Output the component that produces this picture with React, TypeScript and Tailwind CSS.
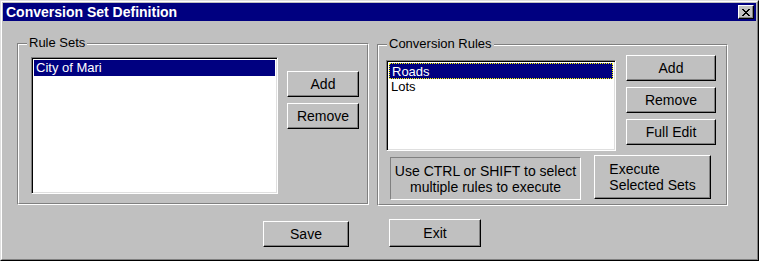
import React from 'react';

const font = "font-['Liberation_Sans',Arial,sans-serif]";

const Btn = ({ label, className }: { label: React.ReactNode; className: string }) => (
    <div
        className={`flex items-center justify-center bg-[#c0c0c0] border border-t-white border-l-white border-r-black border-b-black shadow-[inset_-1px_-1px_0_#808080] text-[14px] text-black ${className}`}
    >
        {label}
    </div>
);

const Group = ({ title, className, children }: { title: string; className: string; children: React.ReactNode }) => (
    <div className={`relative border border-t-[#808080] border-l-[#808080] border-r-white border-b-white ${className}`}>
        <div className="h-full border border-t-white border-l-white border-r-[#808080] border-b-[#808080]">
            {children}
        </div>
        <span className="absolute -top-[9px] left-[9px] px-[2px] bg-[#c0c0c0] text-[13px] leading-[15px] text-black">
            {title}
        </span>
    </div>
);

const ListBox = ({ items, focus, className }: { items: string[]; focus?: boolean; className: string }) => (
    <div
        className={`bg-white border border-t-[#808080] border-l-[#808080] border-r-white border-b-white shadow-[inset_1px_1px_0_#000,inset_-1px_-1px_0_#dfdfdf] p-[2px] ${className}`}
    >
        {items.map((item, i) => (
            <div
                key={item}
                className={`h-[16px] leading-[15px] text-[13px] pl-[2px] ${
                    i === 0 ? 'bg-[#000080] text-white' : 'text-black'
                } ${i === 0 && focus ? 'border border-dotted border-[#ffff00] pl-[1px] leading-[13px]' : ''}`}
            >
                {item}
            </div>
        ))}
    </div>
);

export default function App() {
    return (
        <div className={`w-[759px] h-[261px] bg-[#c0c0c0] ${font} border border-t-[#dfdfdf] border-l-[#dfdfdf] border-r-black border-b-black`}>
            <div className="h-full border border-t-white border-l-white border-r-[#808080] border-b-[#808080] p-[1px] flex flex-col">
                {/* title bar */}
                <div className="h-[18px] bg-[#000080] flex items-center justify-between pl-[3px] pr-[2px]">
                    <span className="text-white font-bold text-[14px] leading-[18px]">Conversion Set Definition</span>
                    <div className="w-[16px] h-[14px] bg-[#c0c0c0] border border-t-white border-l-white border-r-black border-b-black shadow-[inset_-1px_-1px_0_#808080] flex items-center justify-center">
                        <svg width="8" height="7" viewBox="0 0 8 7" shapeRendering="crispEdges">
                            <path d="M0 0h2v1h-2zM6 0h2v1h-2zM1 1h2v1h-2zM5 1h2v1h-2zM2 2h4v1h-4zM3 3h2v1h-2zM2 4h4v1h-4zM1 5h2v1h-2zM5 5h2v1h-2zM0 6h2v1h-2zM6 6h2v1h-2z" fill="#000" />
                        </svg>
                    </div>
                </div>

                {/* groups */}
                <div className="flex items-start gap-[8px] pl-[14px] pt-[22px]">
                    <Group title="Rule Sets" className="w-[352px] h-[162px]">
                        <div className="flex items-start pl-[12px] pt-[12px]">
                            <ListBox items={['City of Mari']} className="w-[247px] h-[137px]" />
                            <div className="flex flex-col gap-[6px] ml-[9px] mt-[14px]">
                                <Btn label="Add" className="w-[72px] h-[26px]" />
                                <Btn label="Remove" className="w-[72px] h-[26px]" />
                            </div>
                        </div>
                    </Group>

                    <Group title="Conversion Rules" className="w-[351px] h-[162px] mt-[1px]">
                        <div className="flex flex-col pl-[7px] pt-[9px]">
                            <div className="flex items-start">
                                <ListBox items={['Roads', 'Lots']} focus className="w-[230px] h-[91px] mt-[5px]" />
                                <div className="flex flex-col gap-[6px] ml-[10px]">
                                    <Btn label="Add" className="w-[90px] h-[26px]" />
                                    <Btn label="Remove" className="w-[90px] h-[26px]" />
                                    <Btn label="Full Edit" className="w-[90px] h-[26px]" />
                                </div>
                            </div>
                            <div className="flex items-start ml-[4px] mt-[4px]">
                                <div className="w-[191px] h-[43px] mt-[2px] border border-t-[#808080] border-l-[#808080] border-r-white border-b-white flex items-center justify-center text-center text-[14px] leading-[16px] text-black">
                                    Use CTRL or SHIFT to select<br />multiple rules to execute
                                </div>
                                <Btn
                                    label={<span className="inline-block text-left leading-[16px]">Execute<br />Selected Sets</span>}
                                    className="w-[117px] h-[44px] ml-[13px]"
                                />
                            </div>
                        </div>
                    </Group>
                </div>

                {/* bottom buttons */}
                <div className="flex items-end gap-[40px] pl-[260px] mt-[13px]">
                    <Btn label="Save" className="w-[86px] h-[26px]" />
                    <Btn label="Exit" className="w-[92px] h-[28px]" />
                </div>
            </div>
        </div>
    );
}
